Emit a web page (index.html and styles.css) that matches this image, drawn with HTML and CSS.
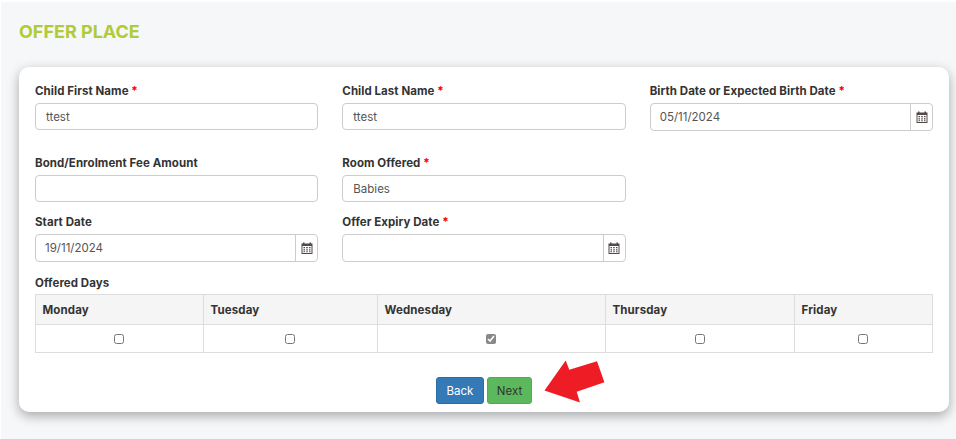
FILE: index.html
```html
<!DOCTYPE html>
<html lang="en">
<head>
<meta charset="utf-8">
<title>Offer Place</title>
<link rel="stylesheet" href="styles.css">
</head>
<body>
<svg class="icon-defs" aria-hidden="true"><defs>
<symbol id="cal" viewBox="0 0 12 12"><path fill-rule="evenodd" fill="#54494a" d="M2 0.5h1.5v1h5v-1H10v1h1.5v10.5H0.5V1.5H2zM1.5 4v7h9V4zM2.5 5h1.5v1.3H2.500zM5.200 5h1.600v1.300H5.200zM8 5h1.500v1.300H8zM2.500 7.200h1.500v1.300H2.500zM5.200 7.200h1.600v1.300H5.200zM8 7.200h1.500v1.300H8zM2.500 9.300h1.500v1H2.500zM5.200 9.300h1.600v1H5.200zM8 9.300h1.500v1H8z"/></symbol>
</defs></svg>
<main class="page">
  <h1 class="title">OFFER PLACE</h1>
  <form class="card">
    <div class="row row-a">
      <div class="field"><label class="label">Child First Name <span class="req">*</span></label><input class="input" type="text" value="ttest"></div>
      <div class="field"><label class="label">Child Last Name <span class="req">*</span></label><input class="input" type="text" value="ttest"></div>
      <div class="field"><label class="label">Birth Date or Expected Birth Date <span class="req">*</span></label>
        <div class="date"><input class="date-input" type="text" value="05/11/2024"><span class="addon"><svg class="cal"><use href="#cal"/></svg></span></div></div>
    </div>
    <div class="row row-b">
      <div class="field"><label class="label">Bond/Enrolment Fee Amount</label><input class="input" type="text"></div>
      <div class="field"><label class="label">Room Offered <span class="req">*</span></label><input class="input" type="text" value="Babies"></div>
    </div>
    <div class="row row-c">
      <div class="field"><label class="label">Start Date</label>
        <div class="date"><input class="date-input" type="text" value="19/11/2024"><span class="addon"><svg class="cal"><use href="#cal"/></svg></span></div></div>
      <div class="field"><label class="label">Offer Expiry Date <span class="req">*</span></label>
        <div class="date"><input class="date-input" type="text"><span class="addon"><svg class="cal"><use href="#cal"/></svg></span></div></div>
    </div>
    <div class="label days-label">Offered Days</div>
    <table class="days">
      <colgroup><col class="c1"><col class="c2"><col class="c3"><col class="c4"><col class="c5"></colgroup>
      <thead><tr><th>Monday</th><th>Tuesday</th><th>Wednesday</th><th>Thursday</th><th>Friday</th></tr></thead>
      <tbody><tr>
        <td><input class="check" type="checkbox"></td>
        <td><input class="check" type="checkbox"></td>
        <td><input class="check" type="checkbox" checked></td>
        <td><input class="check" type="checkbox"></td>
        <td><input class="check" type="checkbox"></td>
      </tr></tbody>
    </table>
    <div class="actions">
      <button class="btn btn-back" type="button">Back</button>
      <button class="btn btn-next" type="button">Next</button>
    </div>
  </form>
</main>
<svg class="arrow" viewBox="0 0 62 44" aria-hidden="true"><polygon fill="#ee1c25" points="0.500,30.500 21.700,0.500 25.300,9.800 53,1.300 60.400,22.300 32.700,31.700 36,42.500"/></svg>
</body>
</html>
```
FILE: styles.css
```css
* { box-sizing: border-box; }
html, body { margin: 0; background: #fff; }
body {
  font-family: Inter, "Noto Sans", sans-serif;
  color: #333;
  overflow: hidden;
  height: 439px;
  position: relative;
}
.icon-defs { position: absolute; width: 0; height: 0; }
.page {
  margin: 2px 0 0 1px;
  height: 437px;
  padding: 18px 7px 0 18px;
  background: #f6f7f9;
}
.title {
  margin: 0 0 23px;
  height: 24px;
  line-height: 24px;
  font-size: 18px;
  font-weight: 700;
  color: #afcb37;
}
.card {
  height: 345px;
  padding: 16px 16px 0;
  background: #fff;
  border-radius: 10px;
  box-shadow: 0 4px 12px rgba(0, 0, 0, .32);
}
.row {
  display: grid;
  grid-template-columns: repeat(3, 1fr);
  column-gap: 24px;
}
.row-a { margin-bottom: 24px; }
.row-b { margin-bottom: 12px; }
.row-c { margin-bottom: 13px; }
.label {
  display: block;
  height: 16px;
  line-height: 16px;
  margin-bottom: 4px;
  font-size: 11.500px;
  font-weight: 700;
  letter-spacing: .06px;
  color: #333;
}
.req { color: #f00; }
.input, .date-input {
  font-family: inherit;
  font-size: 11.500px;
  color: #555;
  outline: none;
}
.input {
  display: block;
  width: 100%;
  height: 27px;
  padding: 0 10px;
  background: #fff;
  border: 1px solid #ccc;
  border-radius: 4px;
}
.date {
  display: flex;
  height: 28px;
  border: 1px solid #ccc;
  border-radius: 4px;
  background: #fff;
}
.date-input {
  flex: 1;
  min-width: 0;
  padding: 0 9px;
  border: 0;
  background: transparent;
}
.addon {
  display: flex;
  align-items: center;
  justify-content: center;
  width: 22px;
  border-left: 1px solid #ccc;
}
.cal { width: 12px; height: 12px; display: block; }
.days-label { margin-bottom: 3px; }
.days {
  width: 898px;
  table-layout: fixed;
  border-collapse: separate;
  border-spacing: 0;
  border-top: 1px solid #ddd;
  border-left: 1px solid #ddd;
}
.c1 { width: 168px; }
.c2 { width: 174px; }
.c3 { width: 228px; }
.c4 { width: 189px; }
.c5 { width: 138px; }
.days th, .days td {
  padding: 0;
  border-right: 1px solid #ddd;
  border-bottom: 1px solid #ddd;
}
.days th {
  height: 30px;
  padding-left: 6.500px;
  text-align: left;
  background: #f5f5f5;
  font-size: 11.500px;
  font-weight: 700;
  letter-spacing: .12px;
  color: #333;
}
.days td { height: 28px; text-align: center; line-height: 0; }
.check { margin: 0 1px 0 0; width: 10px; height: 10px; vertical-align: middle; accent-color: #888; }
.actions {
  display: flex;
  justify-content: center;
  gap: 3px;
  margin-top: 24px;
}
.btn {
  height: 27px;
  border-radius: 3px;
  font-family: inherit;
  font-size: 11.500px;
  padding: 0;
}
.btn-back { width: 48px; background: #337ab7; border: 1px solid #2e6da4; color: #fff; }
.btn-next { width: 45px; background: #5cb85c; border: 1px solid #4cae4c; color: #333; }
.arrow {
  position: absolute;
  left: 544px;
  top: 360px;
  width: 62px;
  height: 44px;
}
```
